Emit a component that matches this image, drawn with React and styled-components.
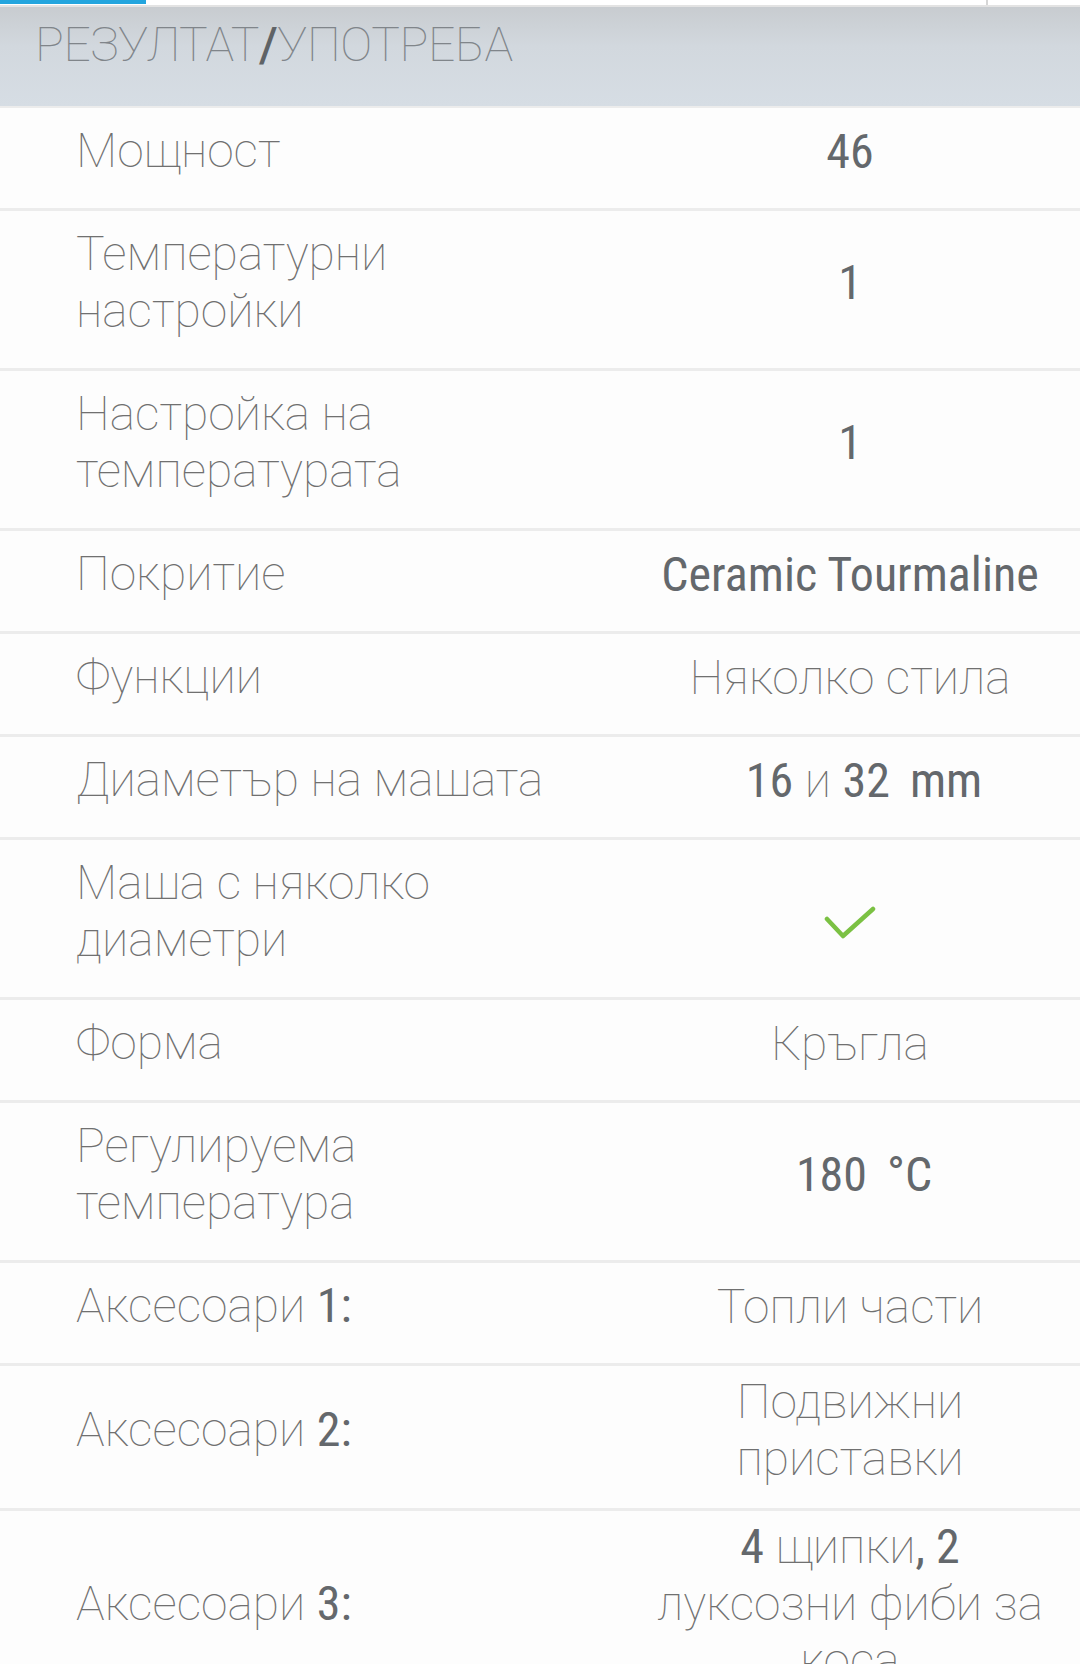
import React from "react";
import styled, { createGlobalStyle } from "styled-components";

const GlobalStyle = createGlobalStyle`
  html, body { margin: 0; padding: 0; background: #fdfdfd; }
  body { font-family: Roboto, "Noto Sans", sans-serif; }
`;

const Page = styled.div`
  width: 1080px;
  background: #fdfdfd;
  color: #666;
`;

const TopStrip = styled.div`
  display: flex;
  height: 5px;
  background: #fff;
  border-bottom: 2px solid #e3e3e3;
`;

const Indicator = styled.div`
  width: 146px;
  height: 4px;
  background: #23a5de;
`;

const Spacer = styled.div`
  flex: 1;
`;

const Divider = styled.div`
  width: 2px;
  background: #d6d6d6;
  margin-right: 92px;
`;

const Header = styled.div`
  height: 57px;
  padding: 9px 0 33px 35px;
  font-size: 48px;
  line-height: 57px;
  font-weight: 100;
  letter-spacing: -0.4px;
  color: #80858a;
  background: linear-gradient(to bottom, #c8ccd0 0%, #d2d8de 40%, #d6dde4 100%);
  border-bottom: 2px solid #ececec;
`;

const Slash = styled.span`
  font-weight: 500;
  color: #5f6366;
`;

const Row = styled.div`
  display: grid;
  grid-template-columns: 1fr 460px;
  align-items: center;
  border-bottom: 3px solid #ececec;
  background: #fdfdfd;
`;

const Label = styled.div`
  padding: 14px 0 29px 76px;
  font-size: 48px;
  line-height: 57px;
  font-weight: 100;
  color: #707070;
`;

const Value = styled.div`
  padding: 7px 20px 21px;
  font-size: 48px;
  line-height: 57px;
  font-weight: 100;
  color: #707070;
  text-align: center;
`;

const B = styled.span`
  font-family: "Roboto Condensed", Roboto, sans-serif;
  font-stretch: 75%;
  font-weight: 400;
  color: #64686c;
`;

const Measure = styled.span`
  margin-left: 28px;
`;

const Unit = styled(B)`
  margin-left: 20px;
`;

const CheckIcon = styled.svg`
  display: block;
  margin: 22px auto 0;
`;

function Check() {
  return (
    <CheckIcon viewBox="0 0 52 34" width="52" height="34">
      <path d="M3 13 L19 30 L49 3" fill="none" stroke="#7bc143" strokeWidth="4.5" strokeLinecap="round" strokeLinejoin="round" />
    </CheckIcon>
  );
}

const specs = [
  { label: "Мощност", value: <B>46</B> },
  { label: <>Температурни<br />настройки</>, value: <B>1</B> },
  { label: <>Настройка на<br />температурата</>, value: <B>1</B> },
  { label: "Покритие", value: <B>Ceramic Tourmaline</B> },
  { label: "Функции", value: "Няколко стила" },
  {
    label: "Диаметър на машата",
    value: (
      <Measure>
        <B>16</B> и <B>32</B>
        <Unit>mm</Unit>
      </Measure>
    ),
  },
  { label: <>Маша с няколко<br />диаметри</>, value: <Check /> },
  { label: "Форма", value: "Кръгла" },
  {
    label: <>Регулируема<br />температура</>,
    value: (
      <Measure>
        <B>180</B>
        <Unit>°C</Unit>
      </Measure>
    ),
  },
  { label: <>Аксесоари <B>1:</B></>, value: "Топли части" },
  { label: <>Аксесоари <B>2:</B></>, value: <>Подвижни<br />приставки</> },
  {
    label: <>Аксесоари <B>3:</B></>,
    value: (
      <>
        <B>4</B> щипки<B>, 2</B>
        <br />
        луксозни фиби за
        <br />
        коса
      </>
    ),
  },
];

const App = () => {
  return (
    <>
      <GlobalStyle />
      <Page>
        <TopStrip>
          <Indicator />
          <Spacer />
          <Divider />
        </TopStrip>
        <Header>
          РЕЗУЛТАТ<Slash>/</Slash>УПОТРЕБА
        </Header>
        {specs.map((s, i) => (
          <Row key={i}>
            <Label>{s.label}</Label>
            <Value>{s.value}</Value>
          </Row>
        ))}
      </Page>
    </>
  );
};

export default App;
